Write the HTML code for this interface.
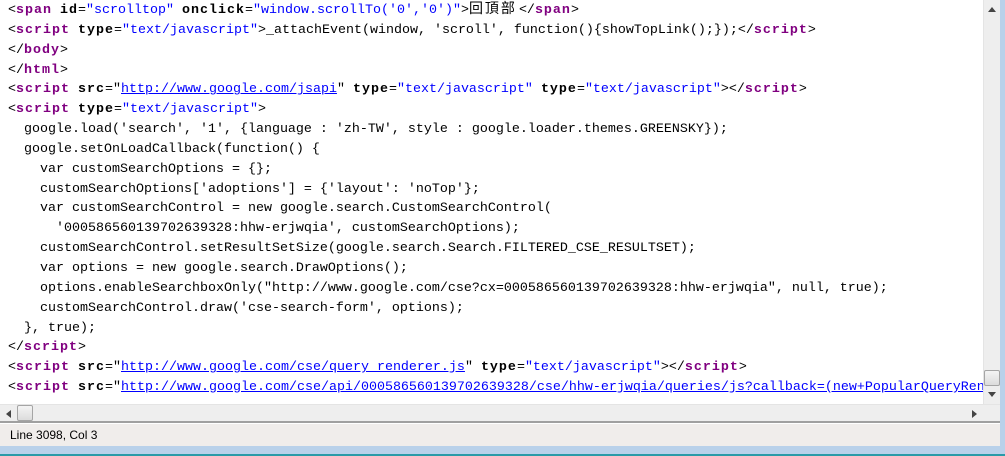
<!DOCTYPE html>
<html><head><meta charset="utf-8"><style>
body{margin:0;width:1005px;height:456px;overflow:hidden;background:#b9d1ea;position:relative;font-family:"Liberation Mono","Noto Sans CJK TC",monospace}
#ed{position:absolute;left:0;top:0;width:983px;height:404px;background:#fff;overflow:hidden}
pre{margin:0;position:absolute;left:8px;top:1px;font-family:"Liberation Mono","Noto Sans CJK TC",monospace;font-size:13.33px;line-height:19.85px;color:#000;white-space:pre}
.t{color:#800080;font-weight:bold;letter-spacing:1px}.a{font-weight:bold;letter-spacing:1px}.s{color:#0000ff}.u{color:#0000ff;text-decoration:underline}
.c{display:inline-block;width:50px;letter-spacing:2px;font-size:14px;line-height:10px}
#vs{position:absolute;left:983px;top:0;width:17px;height:404px;background:#eeeeee;border-left:1px solid #e4e4e4;box-sizing:border-box}
#hs{position:absolute;left:0;top:404px;width:1000px;height:17px;background:#eeeeee;border-top:1px solid #e4e4e4;box-sizing:border-box}
#gl{position:absolute;left:0;top:421px;width:1000px;height:2px;background:#a0a0a0}
#st{position:absolute;left:0;top:423px;width:1000px;height:23px;background:#f0edeb;font-family:"Liberation Sans",sans-serif;font-size:12px;line-height:23px;border-top:1px solid #fff;box-sizing:border-box}
#st span{position:absolute;left:10px;top:0}
.th{position:absolute;background:linear-gradient(#f4f4f4,#dcdcdc);border:1px solid #a5a5a5;border-radius:2px;box-sizing:border-box}
#bl{position:absolute;left:0;top:454px;width:1005px;height:2px;background:#2a9aa8}
</style></head><body>
<div id="ed"><pre>&lt;<span class="t">span</span> <span class="a">id</span>=<span class="s">"scrolltop"</span> <span class="a">onclick</span>=<span class="s">"window.scrollTo('0','0')"</span>&gt;<span class="c">回頂部</span>&lt;/<span class="t">span</span>&gt;
&lt;<span class="t">script</span> <span class="a">type</span>=<span class="s">"text/javascript"</span>&gt;_attachEvent(window, 'scroll', function(){showTopLink();});&lt;/<span class="t">script</span>&gt;
&lt;/<span class="t">body</span>&gt;
&lt;/<span class="t">html</span>&gt;
&lt;<span class="t">script</span> <span class="a">src</span>="<span class="u">http://www.google.com/jsapi</span>" <span class="a">type</span>=<span class="s">"text/javascript"</span> <span class="a">type</span>=<span class="s">"text/javascript"</span>&gt;&lt;/<span class="t">script</span>&gt;
&lt;<span class="t">script</span> <span class="a">type</span>=<span class="s">"text/javascript"</span>&gt;
  google.load('search', '1', {language : 'zh-TW', style : google.loader.themes.GREENSKY});
  google.setOnLoadCallback(function() {
    var customSearchOptions = {};
    customSearchOptions['adoptions'] = {'layout': 'noTop'};
    var customSearchControl = new google.search.CustomSearchControl(
      '000586560139702639328:hhw-erjwqia', customSearchOptions);
    customSearchControl.setResultSetSize(google.search.Search.FILTERED_CSE_RESULTSET);
    var options = new google.search.DrawOptions();
    options.enableSearchboxOnly("http://www.google.com/cse?cx=000586560139702639328:hhw-erjwqia", null, true);
    customSearchControl.draw('cse-search-form', options);
  }, true);
&lt;/<span class="t">script</span>&gt;
&lt;<span class="t">script</span> <span class="a">src</span>="<span class="u">http://www.google.com/cse/query_renderer.js</span>" <span class="a">type</span>=<span class="s">"text/javascript"</span>&gt;&lt;/<span class="t">script</span>&gt;
&lt;<span class="t">script</span> <span class="a">src</span>="<span class="u">http://www.google.com/cse/api/000586560139702639328/cse/hhw-erjwqia/queries/js?callback=(new+PopularQueryRenderer</span></pre></div>
<div id="vs">
<svg style="position:absolute;left:4px;top:7px" width="8" height="5"><path d="M4 0L8 5H0Z" fill="#444"/></svg>
<div class="th" style="left:0;top:370px;width:16px;height:16px"></div>
<svg style="position:absolute;left:4px;top:392px" width="8" height="5"><path d="M0 0H8L4 5Z" fill="#444"/></svg>
</div>
<div id="hs">
<svg style="position:absolute;left:6px;top:5px" width="5" height="8"><path d="M5 0V8L0 4Z" fill="#444"/></svg>
<div class="th" style="left:17px;top:0;width:16px;height:16px"></div>
<svg style="position:absolute;left:972px;top:5px" width="5" height="8"><path d="M0 0V8L5 4Z" fill="#444"/></svg>
</div>
<div id="gl"></div>
<div id="st"><span>Line 3098, Col 3</span></div>
<div id="bl"></div>
</body></html>
